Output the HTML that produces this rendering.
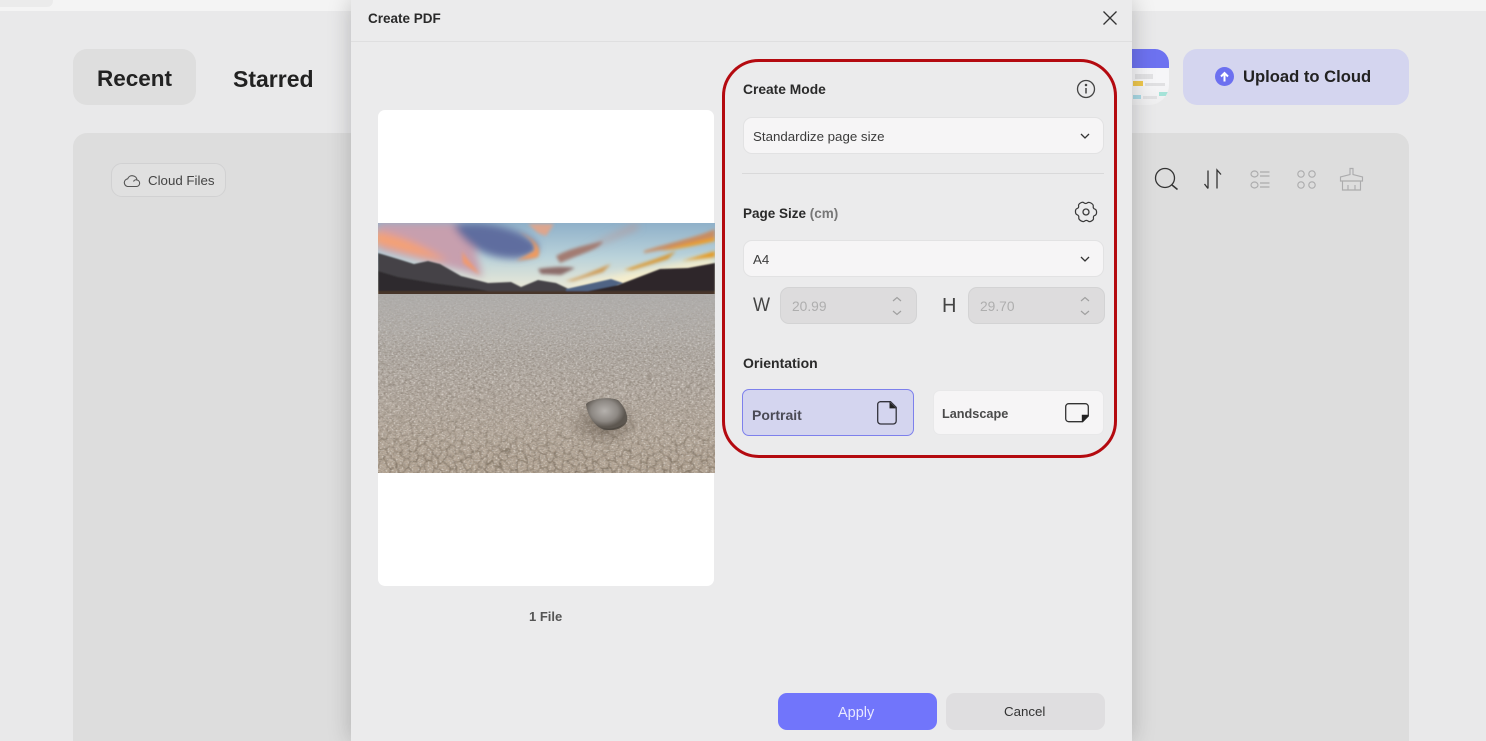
<!DOCTYPE html>
<html><head><meta charset="utf-8">
<style>
*{box-sizing:border-box}
html,body{margin:0;padding:0;width:1486px;height:741px;overflow:hidden;background:#e9e9ea}
#w{position:relative;width:1486px;height:741px;overflow:hidden;background:#e9e9ea;font-family:"Liberation Sans","Noto Sans CJK SC",sans-serif;color:#222}
.a{position:absolute}
.t{position:absolute;white-space:nowrap;line-height:1}
.b{font-weight:700}
.sel{position:absolute;left:743px;width:361px;height:37px;background:#f6f5f6;border:1px solid #e2e2e3;border-radius:9px}
.num{position:absolute;top:287px;height:37px;background:#dddcdd;border:1px solid #d3d3d4;border-radius:9px}
svg{position:absolute;overflow:hidden}
</style></head><body><div id="w">
<div class="a" style="left:0;top:0;width:1486px;height:11px;background:#f4f4f4"></div>
<div class="a" style="left:0;top:0;width:53px;height:7px;background:#ebebeb;border-radius:0 0 6px 0"></div>

<div class="a" style="left:73px;top:49px;width:123px;height:56px;background:#dedede;border-radius:14px"></div>
<div class="t b" style="left:97px;top:68px;font-size:22.500px;color:#222">Recent</div>
<div class="t b" style="left:233px;top:68px;font-size:23px;color:#222">Starred</div>
<div class="a" style="left:73px;top:133px;width:1336px;height:608px;background:#dddddd;border-radius:14px 14px 0 0"></div>
<div class="a" style="left:111px;top:163px;width:115px;height:34px;border:1px solid #d1d1d2;border-radius:11px;background:#e0e0e0"></div>
<svg style="left:123px;top:171px" width="18" height="18" viewBox="0 0 18 18" fill="none" stroke="#555" stroke-width="1.100"><path d="M4.500 15.500h9a3.300 3.300 0 0 0 .6-6.500 4.900 4.900 0 0 0-9.400-1.200A3.900 3.900 0 0 0 4.500 15.500zM10.500 10.500a2.800 2.800 0 0 1 3.600-1.500"/></svg>
<div class="t" style="left:148px;top:174px;font-size:13.300px;color:#444">Cloud Files</div>

<!-- right top -->
<div class="a" style="left:1120px;top:49px;width:49px;height:56px;border-radius:0 14px 20px 0;background:linear-gradient(#f6f6f8 60%,#eeeeef);overflow:hidden">
 <div class="a" style="left:0;top:0;width:49px;height:19px;background:#6d72f0"></div>
 <div class="a" style="left:15px;top:25px;width:18px;height:5px;background:#e2e2e4"></div>
 <div class="a" style="left:13px;top:32px;width:10px;height:5px;background:#efc84e"></div>
 <div class="a" style="left:25px;top:34px;width:20px;height:3px;background:#e0e0e2"></div>
 <div class="a" style="left:39px;top:43px;width:10px;height:4px;background:#a5e3d8"></div>
 <div class="a" style="left:13px;top:46px;width:8px;height:4px;background:#a9d9e5"></div>
 <div class="a" style="left:23px;top:47px;width:14px;height:3px;background:#e0e0e2"></div>
</div>
<div class="a" style="left:1183px;top:49px;width:226px;height:56px;background:#d4d5ef;border-radius:14px"></div>
<svg style="left:1215px;top:67px" width="19" height="19" viewBox="0 0 19 19"><circle cx="9.500" cy="9.500" r="9.500" fill="#6c70f0"/><path d="M9.500 14.500V6.500M6 9.500l3.500-3.500 3.500 3.500" stroke="#fff" stroke-width="2" fill="none"/></svg>
<div class="t b" style="left:1243px;top:69px;font-size:16.600px;color:#222">Upload to Cloud</div>
<svg style="left:1150px;top:165px" width="220" height="30" viewBox="0 0 220 30" fill="none" stroke-width="1.300">
 <circle cx="15" cy="13" r="9.500" stroke="#333"/><path d="M22 20l5.500 4.500" stroke="#333" stroke-width="1.500"/>
 <path d="M58 5.500v18M58 23.500l-3.500-4.500M67 23.500V5l4 4.500" stroke="#333"/>
 <g stroke="#acacad" stroke-width="1.150"><ellipse cx="104.500" cy="9" rx="3.500" ry="3"/><ellipse cx="104.500" cy="20" rx="3.500" ry="3"/><path d="M110 7h9.500M110 11h9.500M110 18h9.500M110 22h9.500"/>
 <circle cx="151" cy="9" r="3.200"/><circle cx="162" cy="9" r="3.200"/><circle cx="151" cy="20" r="3.200"/><circle cx="162" cy="20" r="3.200"/>
 <path d="M200 3.500h3v6l9.500 2.500v4h-22v-4l9.500-2.500zM192.500 16v9h18v-9M198 20v5M205 20v5"/></g>
</svg>

<!-- modal -->
<div class="a" style="left:351px;top:0;width:781px;height:741px;background:#ebebec;box-shadow:0 0 22px rgba(0,0,0,.22)"></div>
<div class="a" style="left:351px;top:41px;width:781px;height:1px;background:#dfdfe0"></div>
<div class="t b" style="left:368px;top:12px;font-size:13.500px;color:#2a2a2a">Create PDF</div>
<svg style="left:1102px;top:10px" width="16" height="16" viewBox="0 0 16 16" stroke="#333" stroke-width="1.300"><path d="M1.500 1.500l13 13M14.500 1.500l-13 13"/></svg>

<!-- paper -->
<div class="a" style="left:378px;top:110px;width:336px;height:476px;background:#fff;border-radius:7px"></div>
<svg style="left:378px;top:223px" width="337" height="250" viewBox="0 0 337 250">
 <defs>
  <linearGradient id="sky" x1="0" y1="0" x2="0" y2="1"><stop offset="0" stop-color="#8fb0c9"/><stop offset=".45" stop-color="#b9d2da"/><stop offset="1" stop-color="#f7eed6"/></linearGradient>
  <linearGradient id="gr" x1="0" y1="0" x2="0" y2="1"><stop offset="0" stop-color="#aeacaa"/><stop offset=".2" stop-color="#b3afab"/><stop offset=".55" stop-color="#b8afa6"/><stop offset="1" stop-color="#b3a493"/></linearGradient>
  <filter id="bl" x="-30%" y="-50%" width="160%" height="200%"><feGaussianBlur stdDeviation="4"/></filter>
  <filter id="bl2" x="-20%" y="-60%" width="140%" height="220%"><feGaussianBlur stdDeviation="1.700"/></filter>
  <filter id="blm" x="-5%" y="-5%" width="110%" height="110%"><feGaussianBlur stdDeviation=".7"/></filter>
  <filter id="sp" x="0" y="0" width="100%" height="100%"><feTurbulence type="fractalNoise" baseFrequency=".35 .65" numOctaves="2" seed="7"/><feColorMatrix values="0 0 0 0 .3  0 0 0 0 .26  0 0 0 0 .22  3 0 0 0 -1.350"/></filter>
  <filter id="sl" x="0" y="0" width="100%" height="100%"><feTurbulence type="fractalNoise" baseFrequency=".5 .8" numOctaves="1" seed="12"/><feColorMatrix values="0 0 0 0 .93  0 0 0 0 .91  0 0 0 0 .87  3 0 0 0 -1.500"/></filter>
  <filter id="dp" x="-5%" y="-5%" width="110%" height="110%"><feTurbulence type="fractalNoise" baseFrequency=".07" numOctaves="2" seed="4" result="n"/><feDisplacementMap in="SourceGraphic" in2="n" scale="13" xChannelSelector="R" yChannelSelector="G"/><feGaussianBlur stdDeviation=".4"/></filter>
  <pattern id="h1" width="18" height="12" patternUnits="userSpaceOnUse" patternTransform="scale(.85 .95)"><path d="M0 6L3 0H9L12 6 9 12H3zM12 6H18" fill="none" stroke="#5a4d3e" stroke-width="1"/></pattern>
  <pattern id="h2" width="18" height="12" patternUnits="userSpaceOnUse" patternTransform="scale(.58 .58)"><path d="M0 6L3 0H9L12 6 9 12H3zM12 6H18" fill="none" stroke="#5f5347" stroke-width="1.200"/></pattern>
  <pattern id="h3" width="18" height="12" patternUnits="userSpaceOnUse" patternTransform="scale(.4 .34)"><path d="M0 6L3 0H9L12 6 9 12H3zM12 6H18" fill="none" stroke="#6a6157" stroke-width="1.500"/></pattern>
  <linearGradient id="f1" x1="0" y1="0" x2="0" y2="1"><stop offset="0" stop-color="#000"/><stop offset=".55" stop-color="#888"/><stop offset="1" stop-color="#eee"/></linearGradient>
  <linearGradient id="f2" x1="0" y1="0" x2="0" y2="1"><stop offset="0" stop-color="#000"/><stop offset=".5" stop-color="#999"/><stop offset="1" stop-color="#000"/></linearGradient>
  <linearGradient id="f3" x1="0" y1="0" x2="0" y2="1"><stop offset="0" stop-color="#000"/><stop offset=".6" stop-color="#666"/><stop offset="1" stop-color="#000"/></linearGradient>
  <linearGradient id="f0" x1="0" y1="0" x2="0" y2="1"><stop offset="0" stop-color="#333"/><stop offset=".35" stop-color="#fff"/></linearGradient>
  <mask id="m1" maskUnits="userSpaceOnUse" x="-10" y="0" width="360" height="270"><rect x="-10" y="165" width="360" height="90" fill="url(#f1)"/></mask>
  <mask id="m2" maskUnits="userSpaceOnUse" x="-10" y="0" width="360" height="270"><rect x="-10" y="120" width="360" height="90" fill="url(#f2)"/></mask>
  <mask id="m3" maskUnits="userSpaceOnUse" x="-10" y="0" width="360" height="270"><rect x="-10" y="85" width="360" height="75" fill="url(#f3)"/></mask>
  <mask id="m0" maskUnits="userSpaceOnUse" x="0" y="0" width="337" height="250"><rect y="72" width="337" height="178" fill="url(#f0)"/></mask>
  <radialGradient id="rk" cx=".45" cy=".4"><stop offset="0" stop-color="#b5b1ad"/><stop offset=".65" stop-color="#8d8883"/><stop offset="1" stop-color="#5d5750"/></radialGradient>
  <radialGradient id="sh" cx=".5" cy=".5"><stop offset="0" stop-color="#4a3d30" stop-opacity=".5"/><stop offset="1" stop-color="#4a3d30" stop-opacity="0"/></radialGradient>
 </defs>
 <rect width="337" height="74" fill="url(#sky)"/>
 <path d="M200 60C250 50 300 38 337 34V72H190z" fill="#fdf1c9" opacity=".8" filter="url(#bl)"/>
 <g filter="url(#bl)">
  <path d="M0 0H85C95 15 100 38 105 54 75 44 35 36 0 26z" fill="#c79fae"/>
  <path d="M-5 8C25 12 50 26 70 38 40 34 15 26 -5 20z" fill="#f5a173"/>
  <path d="M75 2C105-4 145 6 160 22 162 34 140 38 120 34 100 30 85 18 75 2z" fill="#5f6d9f"/>
  <path d="M222 18L260 0V5L205 28z" fill="#b79b9b"/>
 </g>
 <g filter="url(#bl2)">
  <path d="M140 8C152 14 165 22 160 34 155 36 145 36 138 38L156 28C158 20 150 14 140 8z" fill="#ef9a5e"/>
  <path d="M150 1h26l-8 12-8-3z" fill="#dda68e"/>
  <path d="M84 28C90 38 97 44 102 52L85 40z" fill="#f09a6f"/>
  <path d="M178 33C195 24 210 22 225 18 222 26 205 30 182 40z" fill="#a37c72"/>
  <path d="M160 46c12-2 28-3 37-1l-14 7-20-1z" fill="#8c6d6a"/>
  <path d="M187 58c15-3 32-12 46-17l-8 8-30 9z" fill="#cf9a52"/>
  <path d="M246 47C265 40 285 34 298 28l-8 8-36 11z" fill="#d9962e"/>
  <path d="M266 28C290 20 320 14 337 6v10C315 20 290 26 266 30z" fill="#c88c62"/>
  <path d="M282 28C300 22 320 18 337 14v4C320 22 300 26 282 28z" fill="#eb9d25"/>
  <path d="M304 38l33-10v6z" fill="#e59a24"/>
 </g>
 <g filter="url(#blm)">
 <path d="M0 30L20 36 36 41 50 38 62 41 83 53 110 60 133 59 143 64 160 57 178 60 195 68V74H0z" fill="#454247"/>
 <path d="M0 48L20 54 55 60 100 66 130 72 0 74z" fill="#2e2c2d"/>
 <path d="M188 66L233 56 245 60 210 72H188z" fill="#4f6484"/>
 <path d="M205 69L240 62 282 46 310 45 337 40V74H205z" fill="#2f2829"/>
 <rect y="68" width="337" height="4" fill="#46342a"/>
 </g>
 <rect y="71" width="337" height="179" fill="url(#gr)"/>
 <rect y="72" width="337" height="178" filter="url(#sp)" mask="url(#m0)" opacity=".7"/>
 <rect y="72" width="337" height="178" filter="url(#sl)" mask="url(#m0)" opacity=".55"/>
 <g filter="url(#dp)" opacity=".7">
  <rect x="-10" y="165" width="360" height="95" fill="url(#h1)" mask="url(#m1)"/>
  <rect x="-10" y="120" width="360" height="90" fill="url(#h2)" mask="url(#m2)"/>
  <rect x="-10" y="85" width="360" height="75" fill="url(#h3)" mask="url(#m3)"/>
 </g>
 <ellipse cx="226" cy="200" rx="36" ry="24" fill="url(#sh)"/>
 <path d="M208 181C213 176 230 173 240 177 247 184 250 192 249 198 244 205 234 208 226 207 216 203 209 192 208 181z" fill="url(#rk)"/>
 <path d="M222 204C232 208 244 204 249 198 248 203 236 212 222 204z" fill="#47413a" opacity=".7"/>
</svg>
<div class="t b" style="left:529px;top:610px;font-size:13px;color:#555">1 File</div>

<!-- red outline -->
<div class="a" style="left:722px;top:59px;width:395px;height:399px;border:3px solid #b40a10;border-radius:37px"></div>

<div class="t b" style="left:743px;top:83px;font-size:13.800px;color:#2a2a2a">Create Mode</div>
<svg style="left:1076px;top:79px" width="20" height="20" viewBox="0 0 20 20" fill="none" stroke="#444" stroke-width="1.300"><circle cx="10" cy="10" r="8.500"/><path d="M10 9v5.500" stroke-width="1.500"/><circle cx="10" cy="6" r=".6" fill="#444"/></svg>
<div class="sel" style="top:117px"></div>
<div class="t" style="left:753px;top:130px;font-size:13.300px;color:#3c3c3c">Standardize page size</div>
<svg style="left:1080px;top:132px" width="10" height="8" viewBox="0 0 10 8" fill="none" stroke="#333" stroke-width="1.300"><path d="M1 2l4 4 4-4"/></svg>
<div class="a" style="left:742px;top:173px;width:362px;height:1px;background:#d9d9da"></div>

<div class="t b" style="left:743px;top:207px;font-size:13.500px;color:#2a2a2a">Page Size <span style="color:#777">(cm)</span></div>
<svg style="left:1074px;top:200px;overflow:visible" width="24" height="24" viewBox="0 0 24 24" fill="none" stroke="#3a3a3a" stroke-width="1.300"><path d="M8.500 2.800C9 1.500 10 1.200 12 1.200s3 .3 3.500 1.600c.6 1.600 1.600 2.200 3.300 1.900 1.300-.2 2 .3 3 2s1.100 2.600.2 3.600c-1.100 1.300-1.100 2 0 3.300.9 1 .8 1.900-.2 3.600s-1.700 2.200-3 2c-1.700-.3-2.700.3-3.300 1.900-.5 1.300-1.500 1.600-3.500 1.600s-3-.3-3.500-1.600c-.6-1.600-1.600-2.200-3.300-1.900-1.300.2-2-.3-3-2s-1.100-2.600-.2-3.600c1.100-1.300 1.100-2 0-3.300C1.100 9.300 1.200 8.400 2.200 6.700s1.700-2.200 3-2c1.700.3 2.700-.3 3.300-1.900z" transform="translate(12 12) rotate(30) scale(.95) translate(-12 -12)"/><circle cx="12" cy="12" r="3"/></svg>
<div class="sel" style="top:240px"></div>
<div class="t" style="left:753px;top:253px;font-size:13.300px;color:#3c3c3c">A4</div>
<svg style="left:1080px;top:255px" width="10" height="8" viewBox="0 0 10 8" fill="none" stroke="#333" stroke-width="1.300"><path d="M1 2l4 4 4-4"/></svg>

<div class="t" style="left:753px;top:296px;font-size:19px;color:#444;transform:scaleX(.95);transform-origin:left">W</div>
<div class="num" style="left:780px;width:137px"></div>
<div class="t" style="left:792px;top:300px;font-size:13.800px;color:#aeaeae">20.99</div>
<svg style="left:891px;top:296px" width="12" height="20" viewBox="0 0 12 20" fill="none" stroke="#a0a0a0" stroke-width="1.200"><path d="M2 5l4-3.500L10 5M2 15l4 3.500 4-3.500"/></svg>
<div class="t" style="left:942px;top:296px;font-size:20px;color:#444">H</div>
<div class="num" style="left:968px;width:137px"></div>
<div class="t" style="left:980px;top:300px;font-size:13.800px;color:#aeaeae">29.70</div>
<svg style="left:1079px;top:296px" width="12" height="20" viewBox="0 0 12 20" fill="none" stroke="#a0a0a0" stroke-width="1.200"><path d="M2 5l4-3.500L10 5M2 15l4 3.500 4-3.500"/></svg>

<div class="t b" style="left:743px;top:356px;font-size:14px;color:#2a2a2a">Orientation</div>
<div class="a" style="left:742px;top:389px;width:172px;height:47px;background:#d4d5ef;border:1px solid #7d80ec;border-radius:7px"></div>
<div class="t b" style="left:752px;top:408px;font-size:14px;color:#4a4a55">Portrait</div>
<svg style="left:877px;top:401px;overflow:visible" width="20" height="24" viewBox="0 0 20 24"><path d="M3 .7h10.500l5.700 5.700V20a3 3 0 0 1-3 3H3.700a3 3 0 0 1-3-3V3.700a3 3 0 0 1 2.300-3z" fill="none" stroke="#33333c" stroke-width="1.300"/><path d="M12.500.7l6.700 6.700h-6.700z" fill="#222"/></svg>
<div class="a" style="left:933px;top:390px;width:171px;height:45px;background:#f6f5f6;border:1px solid #e8e8e9;border-radius:7px"></div>
<div class="t b" style="left:942px;top:408px;font-size:12.700px;color:#4a4a4a">Landscape</div>
<svg style="left:1065px;top:403px;overflow:visible" width="24" height="20" viewBox="0 0 24 20"><path d="M3.700.7h16.600a3 3 0 0 1 3 3V13l-5.700 5.700H3.700a3 3 0 0 1-3-3v-12a3 3 0 0 1 3-3z" fill="none" stroke="#333" stroke-width="1.300"/><path d="M23.300 11.800v1.500l-5.500 5.400h-1v-6.900z" fill="#222"/></svg>

<div class="a" style="left:778px;top:693px;width:159px;height:37px;background:#7175fb;border-radius:9px"></div>
<div class="t" style="left:838px;top:706px;font-size:14.500px;color:#e8e8ff">Apply</div>
<div class="a" style="left:946px;top:693px;width:159px;height:37px;background:#dfdee0;border-radius:9px"></div>
<div class="t" style="left:1004px;top:705px;font-size:13.300px;color:#333">Cancel</div>
</div></body></html>
